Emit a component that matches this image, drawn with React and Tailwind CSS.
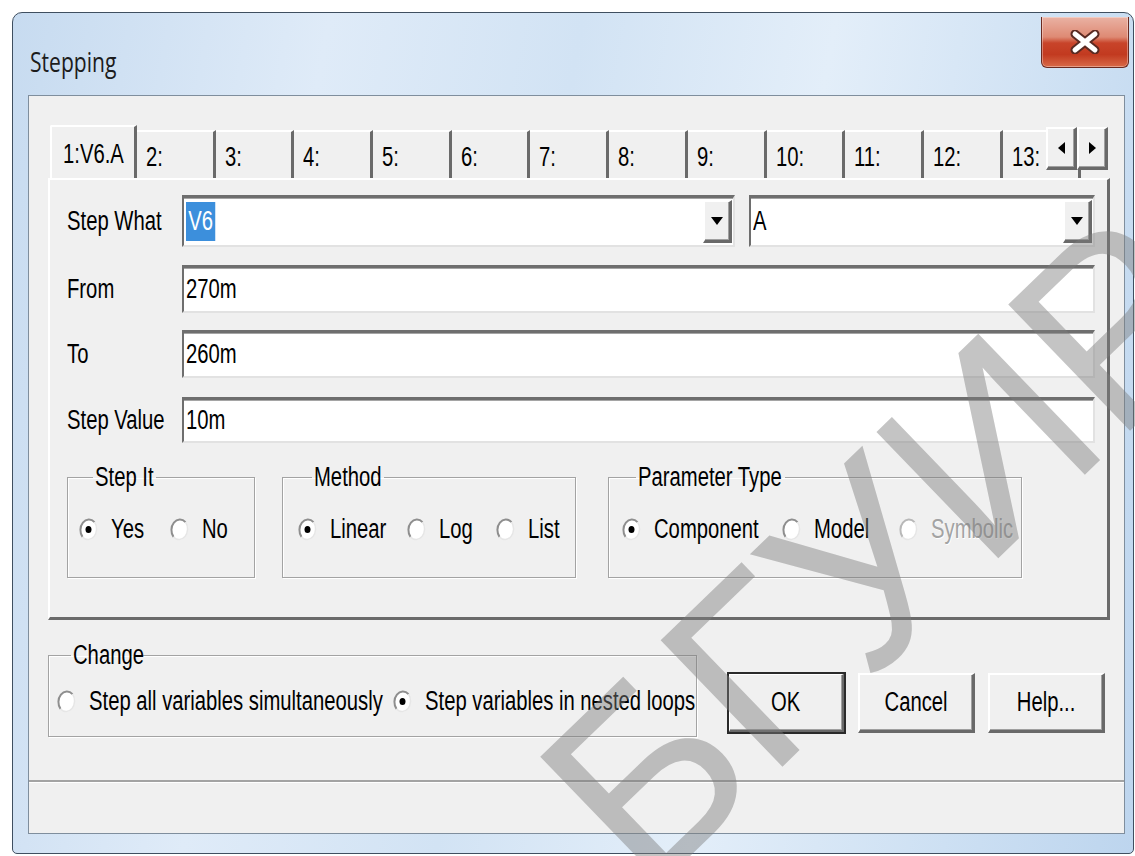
import React from 'react';

// Dialog text: tall, condensed sans (the dialog was captured with a horizontal squeeze)
const UI = "font-['Liberation_Sans',sans-serif] text-[27px] leading-none text-black";

// Classic 3D edges
const sunken =
  'bg-white border-t-[3px] border-l-2 border-b-2 border-r-2 border-t-[#6e6e6e] border-l-[#6e6e6e] border-b-[#e2e2e2] border-r-[#e2e2e2] shadow-[inset_0_1px_0_#a5a5a5]';
const raised =
  'bg-[#f0f0f0] border-t-2 border-l-2 border-b-[3px] border-r-[3px] border-t-white border-l-white border-b-[#696969] border-r-[#696969] shadow-[inset_-1px_-1px_0_#a0a0a0]';

const TABS = ['1:V6.A', '2:', '3:', '4:', '5:', '6:', '7:', '8:', '9:', '10:', '11:', '12:', '13:'];

// condensed text run
const T = ({ children, center, className = '' }) => (
  <span
    className={`inline-block whitespace-nowrap scale-x-[0.75] ${center ? 'origin-center' : 'origin-left'} ${className}`}
  >
    {children}
  </span>
);

const Radio = ({ checked, disabled }) => (
  <svg width="19" height="23" viewBox="0 0 19 23" className="flex-none">
    <ellipse cx="9.5" cy="11.5" rx="8.5" ry="10.5" fill="#fff" />
    <path
      d="M15.5 4.1 A8.5 10.5 0 0 0 3.5 18.9"
      stroke={disabled ? '#b8b8b8' : '#8e8e8e'}
      strokeWidth="2"
      fill="none"
    />
    <path d="M3.5 18.9 A8.5 10.5 0 0 0 15.5 4.1" stroke="#e6e6e6" strokeWidth="1.5" fill="none" />
    {checked && <ellipse cx="9.5" cy="11.5" rx="3" ry="3.6" fill="#000" />}
  </svg>
);

const RadioItem = ({ label, checked, disabled, w = '' }) => (
  <div className={`flex items-center gap-[13px] flex-none ${w}`}>
    <Radio checked={checked} disabled={disabled} />
    <T className={disabled ? 'text-[#a3a3a3] [text-shadow:1px_1px_0_#fff]' : ''}>{label}</T>
  </div>
);

const Group = ({ title, legendW, className, children }) => (
  <fieldset
    className={`min-w-0 flex-none border border-[#a3a3a3] shadow-[1px_1px_0_#fff,inset_1px_1px_0_#fff] ${className}`}
  >
    <legend className={`ml-[14px] px-[2px] leading-[24px] whitespace-nowrap ${legendW}`}>
      <T>{title}</T>
    </legend>
    {children}
  </fieldset>
);

const DropButton = () => (
  <div className={`w-[29px] h-full flex items-center justify-center ${raised}`}>
    <svg width="12" height="8" viewBox="0 0 12 8">
      <path d="M0 0h12L6 8z" fill="#000" />
    </svg>
  </div>
);

const Combo = ({ className, children }) => (
  <div className={`flex items-stretch h-full ${sunken} ${className}`}>
    <div className="flex-1 min-w-0 flex items-center pl-[2px]">{children}</div>
    <div className="py-[2px] pr-[1px]">
      <DropButton />
    </div>
  </div>
);

const Field = ({ label, value, className }) => (
  <div className={`flex items-center ${className}`}>
    <span className="w-[115px] flex-none">
      <T>{label}</T>
    </span>
    <div className={`flex-1 h-full flex items-center pl-[2px] ${sunken}`}>
      <T>{value}</T>
    </div>
  </div>
);

const ArrowButton = ({ dir }) => (
  <div className={`w-[31px] h-full flex items-center justify-center ${raised}`}>
    <svg width="7" height="12" viewBox="0 0 7 12">
      <path d={dir === 'left' ? 'M7 0v12L0 6z' : 'M0 0v12l7-6z'} fill="#000" />
    </svg>
  </div>
);

const TabStrip = () => (
  <div className="relative h-[53px] pl-[2px] flex items-end overflow-hidden">
    {TABS.map((t, i) =>
      i === 0 ? (
        <div
          key={t}
          className="relative z-10 -mb-[2px] w-[87px] h-[55px] flex-none flex items-center pl-[11px] pt-[2px] bg-[#f0f0f0] border-t-2 border-l-2 border-r-[3px] border-t-white border-l-white border-r-[#6a6a6a] rounded-tl-[2px]"
        >
          <T>{t}</T>
        </div>
      ) : (
        <div
          key={t}
          className="w-[78.7px] h-[48px] flex-none flex items-center pl-[9px] pt-[4px] bg-[#f0f0f0] border-t-2 border-r-[3px] border-t-white border-r-[#6a6a6a]"
        >
          <T>{t}</T>
        </div>
      )
    )}
    <div className="absolute right-[2px] top-[2px] h-[43px] flex">
      <ArrowButton dir="left" />
      <ArrowButton dir="right" />
    </div>
  </div>
);

const StepPanel = () => (
  <div className="h-[442px] bg-[#f0f0f0] border-t-2 border-l-2 border-b-[3px] border-r-[3px] border-t-white border-l-white border-b-[#6a6a6a] border-r-[#6a6a6a] pt-[15px] pl-[17px] pr-[12px]">
    <div className="flex items-center h-[52px]">
      <span className="w-[115px] flex-none">
        <T>Step What</T>
      </span>
      <Combo className="w-[553px] flex-none">
        <T className="bg-[#3c8fdc] text-white px-[3px] py-[6px]">V6</T>
      </Combo>
      <Combo className="flex-1 ml-[14px]">
        <T>A</T>
      </Combo>
    </div>
    <Field label="From" value="270m" className="h-[48px] mt-[18px]" />
    <Field label="To" value="260m" className="h-[48px] mt-[17px]" />
    <Field label="Step Value" value="10m" className="h-[46px] mt-[19px]" />

    <div className="flex mt-[22px]">
      <Group title="Step It" legendW="w-[63px]" className="w-[188px] h-[113px] pl-[11px]">
        <div className="flex items-center mt-[27px]">
          <RadioItem label="Yes" checked w="w-[91px]" />
          <RadioItem label="No" />
        </div>
      </Group>
      <Group title="Method" legendW="w-[72px]" className="w-[294px] h-[113px] ml-[27px] pl-[15px]">
        <div className="flex items-center mt-[27px]">
          <RadioItem label="Linear" checked w="w-[109px]" />
          <RadioItem label="Log" w="w-[89px]" />
          <RadioItem label="List" />
        </div>
      </Group>
      <Group title="Parameter Type" legendW="w-[149px]" className="w-[414px] h-[113px] ml-[32px] pl-[13px]">
        <div className="flex items-center mt-[27px]">
          <RadioItem label="Component" checked w="w-[160px]" />
          <RadioItem label="Model" w="w-[117px]" />
          <RadioItem label="Symbolic" disabled />
        </div>
      </Group>
    </div>
  </div>
);

const PushButton = ({ label, isDefault }) => (
  <div
    className={`w-[117px] h-[60px] flex items-center justify-center ${raised} ${
      isDefault ? 'outline outline-2 outline-[#2a2a2a] -outline-offset-1' : ''
    }`}
  >
    <T center>{label}</T>
  </div>
);

const CloseButton = () => (
  <div className="w-[88px] h-[51px] rounded-b-[6px] border border-t-0 border-[#6b2a20] bg-[linear-gradient(180deg,#eab2a4_0%,#de8a74_40%,#c8442a_52%,#c23a20_75%,#d86a48_100%)] shadow-[inset_0_0_0_1px_rgba(255,255,255,0.35)] flex items-center justify-center">
    <svg width="30" height="24" viewBox="0 0 30 24">
      <path d="M5 4l20 16M25 4L5 20" stroke="#5a2a22" strokeWidth="9" strokeLinecap="round" />
      <path d="M5 4l20 16M25 4L5 20" stroke="#fff" strokeWidth="5" strokeLinecap="round" />
    </svg>
  </div>
);

export default function App() {
  return (
    <div className="relative w-[1135px] h-[856px] overflow-hidden bg-white pt-[12px] pl-[12px]">
      {/* window frame */}
      <div className="w-[1122px] h-[842px] flex flex-col rounded-t-[10px] rounded-b-[5px] border border-[#3f4f60] bg-[linear-gradient(100deg,#c7dbf0_0%,#dfebf8_25%,#d2e3f4_45%,#e3eef9_65%,#cde0f3_85%,#bdd5ee_100%)]">
        <div className="h-[82px] flex-none flex items-start justify-between">
          <span className="mt-[35px] ml-[17px] inline-block origin-left scale-x-[0.78] font-['Open_Sans',sans-serif] text-[27px] leading-none text-[#1c1c1c]">
            Stepping
          </span>
          <div className="mr-[4px] mt-[4px]">
            <CloseButton />
          </div>
        </div>

        {/* client area */}
        <div className={`flex-1 ml-[15px] mr-[8px] mb-[19px] flex flex-col bg-[#f0f0f0] border border-[#7f8e9d] ${UI}`}>
          <div className="mt-[29px] ml-[19px] mr-[14px]">
            <TabStrip />
            <StepPanel />
          </div>

          <div className="flex items-start mt-[23px] ml-[19px]">
            <Group title="Change" legendW="w-[70px]" className="w-[649px] h-[94px] pl-[8px]">
              <div className="flex items-center mt-[21px]">
                <RadioItem label="Step all variables simultaneously" w="w-[336px]" />
                <RadioItem label="Step variables in nested loops" checked />
              </div>
            </Group>
            <div className="flex gap-[13px] ml-[31px] mt-[30px]">
              <PushButton label="OK" isDefault />
              <PushButton label="Cancel" />
              <PushButton label="Help..." />
            </div>
          </div>

          {/* status bar */}
          <div className="mt-auto h-[53px] border-t-2 border-t-[#a3a3a3] shadow-[inset_0_1px_0_#fff]" />
        </div>
      </div>

      {/* diagonal watermark */}
      <div className="pointer-events-none absolute left-[497px] top-[742px] origin-top-left -rotate-[44deg] whitespace-nowrap font-['Liberation_Sans','DejaVu_Sans',sans-serif] text-[255px] leading-none text-[#7c7c7c]/45">
        БГУИР
      </div>
    </div>
  );
}
